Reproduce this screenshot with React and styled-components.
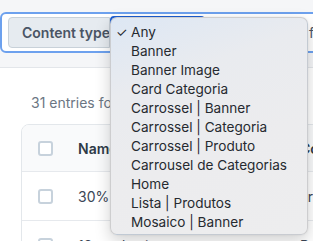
import React from "react";
import styled, { createGlobalStyle } from "styled-components";

const Global = createGlobalStyle`
  html, body { margin: 0; padding: 0; background: #ffffff; overflow: hidden; }
  body { font-family: Inter, "Noto Sans", "Liberation Sans", sans-serif; width: 313px; height: 241px; }
`;

const Page = styled.div`
  position: relative;
  width: 313px;
  height: 241px;
  overflow: hidden;
`;

const FilterBar = styled.div`
  background: #f5f6f8;
  padding-top: 12px;
  height: 68px;
  box-sizing: border-box;
  border-bottom: 1px solid #e3e6ea;
`;

const FocusRing = styled.div`
  width: 360px;
  height: 41px;
  box-sizing: border-box;
  border: 2px solid #6da1ee;
  border-radius: 6px;
  background: #ffffff;
  display: flex;
  align-items: center;
  padding: 0 0 0 6px;
`;

const Addon = styled.div`
  width: 102px;
  height: 31px;
  box-sizing: border-box;
  display: flex;
  align-items: center;
  padding-left: 13px;
  background: #e6ebf0;
  border: 1px solid #c8d1d9;
  border-radius: 4px 0 0 4px;
  font-size: 14px;
  font-weight: 600;
  color: #4a5565;
  white-space: nowrap;
  overflow: hidden;
`;

const SelectBox = styled.div`
  width: 95px;
  height: 33px;
  box-sizing: border-box;
  border: 2px solid #1d5fd4;
  border-radius: 4px;
  background: #fff;
`;

const NextFilter = styled.div`
  margin-left: 104px;
  font-size: 14px;
  color: #4a5565;
  white-space: nowrap;
`;

const Content = styled.div`
  padding: 0 0 0 21px;
`;

const Count = styled.div`
  padding: 25px 0 0 10px;
  height: 56px;
  box-sizing: border-box;
  font-size: 14px;
  color: #6b7683;
  line-height: 20px;
`;

const Card = styled.div`
  width: 420px;
  border: 1px solid #e3e7eb;
  border-radius: 8px;
  overflow: hidden;
`;

const Row = styled.div`
  display: grid;
  grid-template-columns: 56px 222px 1fr;
  align-items: center;
  height: ${(p) => (p.$head ? 46 : 48)}px;
  background: ${(p) => (p.$head ? "#f9fafb" : "#ffffff")};
  border-top: ${(p) => (p.$first ? "none" : "1px solid #e6e9ed")};
  font-size: 14px;
  font-weight: ${(p) => (p.$head ? 600 : 400)};
  color: ${(p) => (p.$head ? "#2f3a48" : "#3b4656")};
  white-space: nowrap;
`;

const Check = styled.span`
  display: block;
  width: 15px;
  height: 15px;
  box-sizing: border-box;
  margin-left: 16px;
  border: 2px solid #c7d2dc;
  border-radius: 3px;
  background: #fff;
`;

const Menu = styled.div`
  position: absolute;
  left: 110px;
  top: 17px;
  width: 198px;
  height: 218px;
  box-sizing: border-box;
  padding: 5px 0 4px;
  border-radius: 7px;
  border: 1px solid rgba(0, 0, 0, 0.13);
  background: linear-gradient(160deg, #dde7f4 0%, #e9ebef 28%, #ececee 60%, #ededee 100%);
  box-shadow: 0 6px 16px rgba(0, 0, 0, 0.18), 0 0 2px rgba(0, 0, 0, 0.08);
`;

const Item = styled.div`
  position: relative;
  height: 19px;
  line-height: 19px;
  padding-left: 20px;
  font-size: 13.6px;
  color: #262a30;
  white-space: nowrap;
`;

const Tick = styled.span`
  position: absolute;
  left: 5px;
  top: 0;
  font-size: 13px;
`;

const options = [
  "Any",
  "Banner",
  "Banner Image",
  "Card Categoria",
  "Carrossel | Banner",
  "Carrossel | Categoria",
  "Carrossel | Produto",
  "Carrousel de Categorias",
  "Home",
  "Lista | Produtos",
  "Mosaico | Banner",
];

export default function App() {
  return (
    <Page>
      <Global />
      <FilterBar>
        <FocusRing>
          <Addon>Content type</Addon>
          <SelectBox />
          <NextFilter>filter</NextFilter>
        </FocusRing>
      </FilterBar>
      <Content>
        <Count>31 entries found</Count>
        <Card>
          <Row $head $first>
            <Check />
            <span>Name</span>
            <span>Content type</span>
          </Row>
          <Row>
            <Check />
            <span>30% OFF</span>
            <span>arrossel</span>
          </Row>
          <Row>
            <Check />
            <span>12x todo site</span>
            <span>Banner</span>
          </Row>
        </Card>
      </Content>
      <Menu>
        {options.map((o, i) => (
          <Item key={o}>
            {i === 0 && <Tick>✓</Tick>}
            {o}
          </Item>
        ))}
      </Menu>
    </Page>
  );
}
